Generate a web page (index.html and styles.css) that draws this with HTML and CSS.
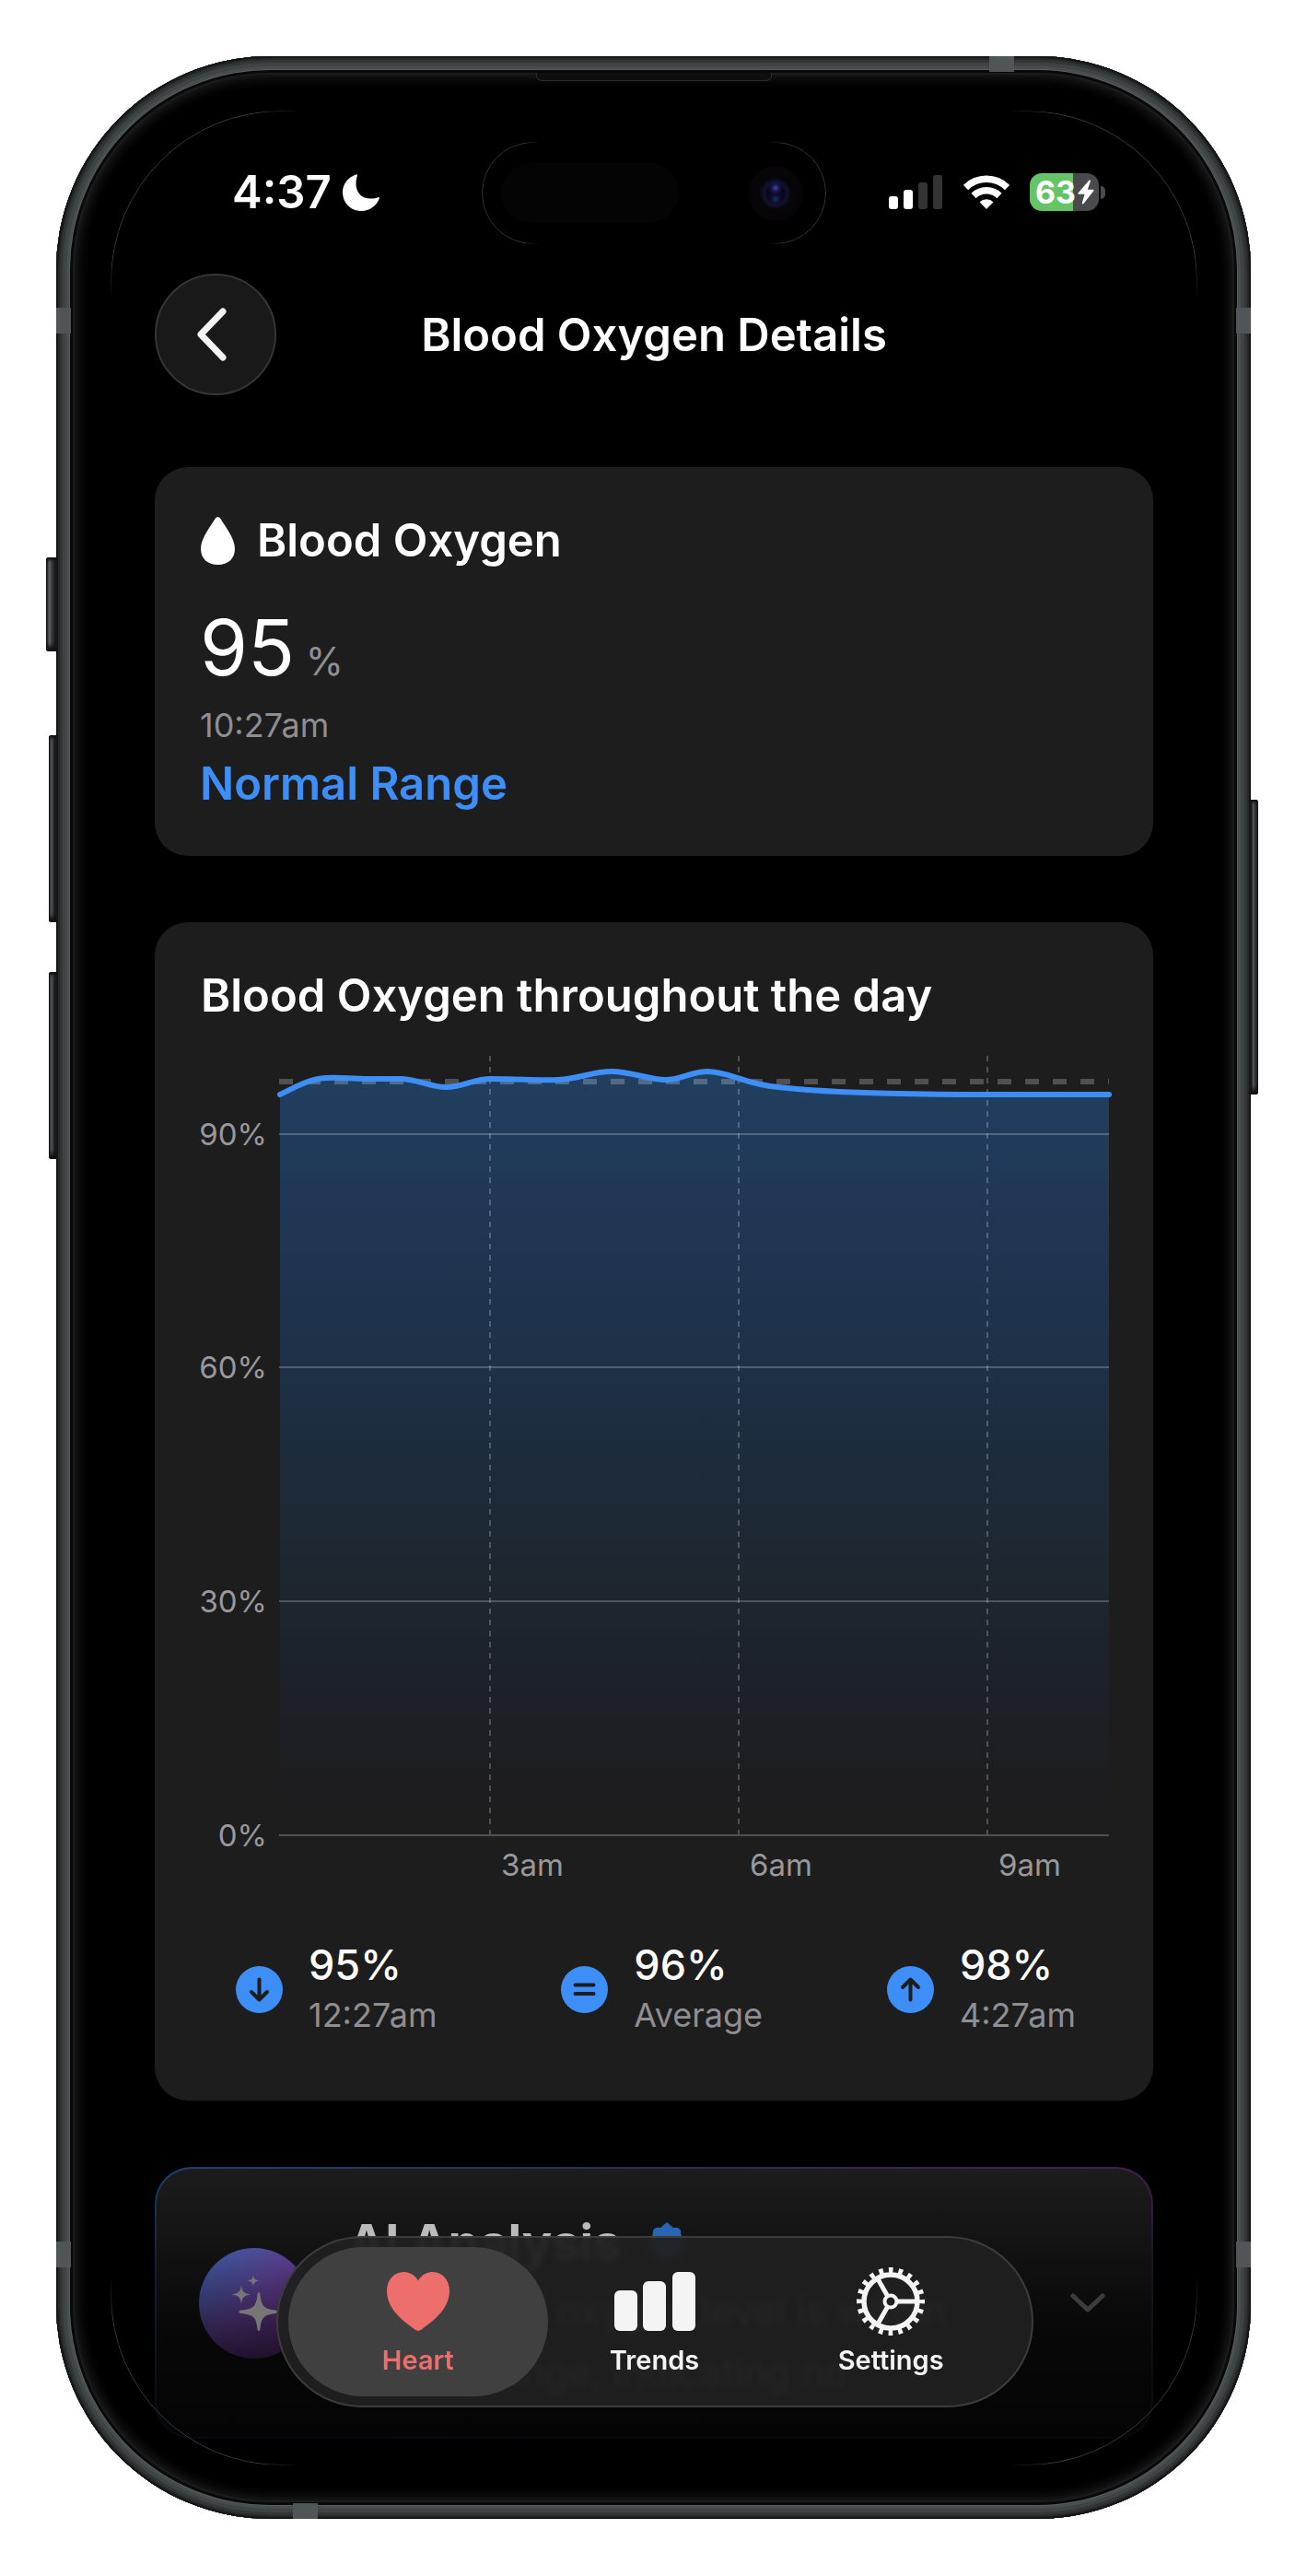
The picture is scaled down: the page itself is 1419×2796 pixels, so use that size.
FILE: index.html
```html
<!DOCTYPE html>
<html lang="en">
<head>
  <meta charset="UTF-8">
  <meta name="viewport" content="width=device-width, initial-scale=1.0">
  <title>Blood Oxygen Details</title>
  <link rel="stylesheet" href="styles.css">
</head>
<body>
  <div class="phone">
    <!-- hardware -->
    <span class="key key-action"></span>
    <span class="key key-up"></span>
    <span class="key key-down"></span>
    <span class="key key-power"></span>
    <span class="band band-top"></span>
    <span class="band band-bottom"></span>
    <span class="band band-side band-left-top"></span>
    <span class="band band-side band-right-top"></span>
    <span class="band band-side band-left-bottom"></span>
    <span class="band band-side band-right-bottom"></span>
    <span class="speaker"></span>
    <span class="screen-edge"></span>
    <div class="island">
      <span class="island-sensor"></span>
      <span class="island-camera"></span>
    </div>

    <div class="screen">
      <div class="status">
        <div class="status-left">
          <span class="status-time">4:37</span>
          <svg class="moon" width="40" height="40" viewBox="0 0 40 40"><path fill="#fff" d="M14.5 0.5C15.5 0 16.3 0.8 15.8 2C12 13 16 27 31 26.6C34 26.5 36.500 25.800 38.300 25.200C39.500 24.800 40.200 25.500 39.800 26.600C36.500 35 29 40 20.500 40C9 40 0 31.500 0 19.500C0 10.500 6.500 3 14.500 0.500Z"/></svg>
        </div>
        <div class="status-right">
          <svg width="59" height="38" viewBox="0 0 59 38">
            <rect x="0" y="23" width="10" height="14" rx="3" fill="#fff"/>
            <rect x="16" y="16" width="10" height="21" rx="3" fill="#fff"/>
            <rect x="32" y="8" width="10" height="29" rx="3" fill="#333"/>
            <rect x="48" y="0" width="10" height="37" rx="3" fill="#333"/>
          </svg>
          <svg width="50" height="38" viewBox="0 0 50 38">
            <g fill="none" stroke="#fff" stroke-width="7.500">
              <path d="M2.500 13.500A32 32 0 0 1 47.500 13.500"/>
              <path d="M11 22.500A20 20 0 0 1 39 22.500"/>
            </g>
            <path fill="#fff" d="M25 37L17.500 29.200A10.800 10.800 0 0 1 32.500 29.200Z"/>
          </svg>
          <div class="battery">
            <span class="battery-body"><span class="battery-level">63</span><svg width="18" height="27" viewBox="0 0 18 27"><path fill="#fff" d="M12.500 0.500L0.500 14.500Q0 15.700 1.200 15.700H7.500L4.800 25.500Q5 27 6.500 26L17.500 12Q18 10.800 16.800 10.700H10.800L14 1.500Q14 0 12.500 0.500Z"/></svg></span>
            <span class="battery-cap"></span>
          </div>
        </div>
      </div>

      <header class="header">
        <button class="back" type="button" aria-label="Back">
          <svg width="34" height="58" viewBox="0 0 34 58"><path d="M29 4L5 29L29 54" fill="none" stroke="#f2f2f2" stroke-width="7" stroke-linecap="round" stroke-linejoin="round"/></svg>
        </button>
        <h1 class="header-title">Blood Oxygen Details</h1>
      </header>

      <main class="content">
        <section class="card current">
          <h2 class="card-title">
            <svg width="37" height="52" viewBox="0 0 37 52"><path fill="#fff" d="M15.500 2Q18.500 -2 21.500 2C26 10 37 23 37 34.500C37 45.500 29.500 52 18.500 52C7.500 52 0 45.500 0 34.500C0 23 11 10 15.500 2Z"/></svg>
            Blood Oxygen
          </h2>
          <p class="current-value">95 <span class="current-unit">%</span></p>
          <p class="current-time">10:27am</p>
          <p class="current-range">Normal Range</p>
        </section>

        <section class="card day">
          <h2 class="card-title">Blood Oxygen throughout the day</h2>
          <svg class="chart" viewBox="0 0 988 904" role="img" aria-label="Blood oxygen by hour">
            <defs>
              <linearGradient id="fill" x1="0" y1="0" x2="0" y2="1">
                <stop offset="0" stop-color="#213f60"/>
                <stop offset="0.250" stop-color="#1f3450"/>
                <stop offset="0.400" stop-color="#1e3046"/>
                <stop offset="0.520" stop-color="#1d2b3a"/>
                <stop offset="0.660" stop-color="#1d2730"/>
                <stop offset="0.800" stop-color="#1d2129"/>
                <stop offset="0.930" stop-color="#1d1d20"/>
                <stop offset="1" stop-color="#1d1d1d"/>
              </linearGradient>
            </defs>
            <path fill="url(#fill)" d="M88 45C103 38 118 28 138 27C154 26 164 28 184 28H218C238 28 250 37 268 37C286 37 298 28 317 28C350 28 366 30 390 29C414 28 426 20 448 20C470 20 488 29 507 29C524 29 534 20 552 20C576 20 592 34 629 37C690 44 780 45 860 45H988V848H88Z"/>
            <g class="chart-grid">
              <path d="M87 88H988M87 341H988M87 595H988"/>
              <path d="M87 849H988"/>
              <path stroke-dasharray="6 6" d="M316 3V848M586 3V848M856 3V848"/>
              <path stroke-width="6" stroke-dasharray="15 15" d="M87 31H988"/>
            </g>
            <path class="chart-line" d="M88 45C103 38 118 28 138 27C154 26 164 28 184 28H218C238 28 250 37 268 37C286 37 298 28 317 28C350 28 366 30 390 29C414 28 426 20 448 20C470 20 488 29 507 29C524 29 534 20 552 20C576 20 592 34 629 37C690 44 780 45 860 45H988"/>
            <g class="chart-label" text-anchor="end">
              <text x="74" y="100">90%</text>
              <text x="74" y="353">60%</text>
              <text x="74" y="607">30%</text>
              <text x="74" y="861">0%</text>
            </g>
            <g class="chart-label">
              <text x="328" y="893">3am</text>
              <text x="598" y="893">6am</text>
              <text x="868" y="893">9am</text>
            </g>
          </svg>
          <div class="stats">
            <div class="stat">
              <svg class="stat-icon" viewBox="0 0 51 51"><circle cx="25.500" cy="25.500" r="25.500"/><path d="M25.500 14.500V36.500M17 28L25.500 36.500L34 28"/></svg>
              <div>
                <div class="stat-value">95%</div>
                <div class="stat-note">12:27am</div>
              </div>
            </div>
            <div class="stat">
              <svg class="stat-icon" viewBox="0 0 51 51"><circle cx="25.500" cy="25.500" r="25.500"/><path d="M15.500 20.500H35.500M15.500 30H35.500"/></svg>
              <div>
                <div class="stat-value">96%</div>
                <div class="stat-note">Average</div>
              </div>
            </div>
            <div class="stat">
              <svg class="stat-icon" viewBox="0 0 51 51"><circle cx="25.500" cy="25.500" r="25.500"/><path d="M25.500 36.500V14.500M17 23L25.500 14.500L34 23"/></svg>
              <div>
                <div class="stat-value">98%</div>
                <div class="stat-note">4:27am</div>
              </div>
            </div>
          </div>
        </section>

        <section class="ai">
          <div class="ai-icon">
            <svg width="52" height="64" viewBox="0 0 52 64"><g fill="#767676">
              <path d="M31 20C32 20 32.300 21 32.600 23C34 36 37 38 49 39.500C52 40 52 42.500 49 43C37 44.500 34 47 32.600 59C32.300 61 32 62 31 62C30 62 29.700 61 29.400 59C28 47 25 44.500 12 43C8.500 42.500 8.500 40 12 39.500C25 38 28 36 29.400 23C29.700 21 30 20 31 20Z"/>
              <path d="M12 12C13 19 14 21 22 22.500C14 24 13 26 12 33C11 26 10 24 1.500 22.500C10 21 11 19 12 12Z"/>
              <path d="M25 1C25.700 5.500 26.500 6.800 32 7.500C26.500 8.300 25.700 9.500 25 14C24.300 9.500 23.500 8.300 18 7.500C23.500 6.800 24.300 5.500 25 1Z"/>
            </g></svg>
          </div>
          <div class="ai-body">
            <h2 class="ai-title">AI Analysis
              <svg width="44" height="44" viewBox="0 0 44 44"><path fill="#2a65b5" d="M22 0L29 6Q38 4 37.500 14L44 22L38 30Q38 39 29 38L22 44L15 38Q6 39 6 30L0 22L6.500 14Q6 4 15 6Z"/></svg>
            </h2>
            <p class="ai-text">Your blood oxygen level is within normal range, indicating no</p>
          </div>
          <svg class="ai-chevron" width="38" height="22" viewBox="0 0 38 22"><path d="M3 3L19 18L35 3" fill="none" stroke="#3d3d3f" stroke-width="5" stroke-linecap="round" stroke-linejoin="round"/></svg>
        </section>
      </main>
    </div>

    <nav class="tabs">
      <a class="tab active" href="#heart">
        <svg width="68" height="64" viewBox="0 0 68 64"><path fill="currentColor" d="M34 9.500C30.500 3.500 25 0 18.500 0C8 0 0 8.500 0 20.500C0 38 14 51 30.500 62.500Q34 65 37.500 62.500C54 51 68 38 68 20.500C68 8.500 60 0 49.500 0C43 0 37.500 3.500 34 9.500Z"/></svg>
        Heart
      </a>
      <a class="tab" href="#trends">
        <svg width="88" height="64" viewBox="0 0 88 64"><g fill="currentColor">
          <rect x="0" y="20" width="25" height="44" rx="6"/>
          <rect x="31" y="10" width="25" height="54" rx="6"/>
          <rect x="63" y="0" width="25" height="64" rx="6"/>
        </g></svg>
        Trends
      </a>
      <a class="tab" href="#settings">
        <svg width="74" height="74" viewBox="-37 -37 74 74"><g fill="none" stroke="currentColor">
          <circle r="29" stroke-width="5.500"/>
          <circle r="34" stroke-width="6" stroke-dasharray="4.680 6" stroke-dashoffset="2.340"/>
          <circle r="6.500" stroke-width="4"/>
          <path stroke-width="5" d="M7 0H28M-3.500 -6L-14 -24.500M-3.500 6L-14 24.500"/>
        </g></svg>
        Settings
      </a>
    </nav>
  </div>
</body>
</html>
```

FILE: styles.css
```css
html, body {
  margin: 0;
  padding: 0;
  box-sizing: border-box;
  background-color: #fff;
  color: #fff;
  font-family: Inter, "Liberation Sans", sans-serif;
}
*, *:before, *:after { box-sizing: inherit; }
body { padding: 61px 61px 62px; }
h1, h2, p { margin: 0; font-weight: 400; }
svg { display: block; flex-shrink: 0; }

/* phone body, the rings of the metal frame are inset shadows */
.phone {
  position: relative;
  max-width: 1297px;
  margin: 0 auto;
  padding: 59px;
  border-radius: 232px;
  background-color: #000;
  box-shadow:
    inset 0 0 0 2px #141617,
    inset 0 0 0 4px #242829,
    inset 0 0 0 7px #313536,
    inset 0 0 0 11px #3e4344,
    inset 0 0 0 14px #484e50,
    inset 0 0 0 15px #585e60,
    inset 0 0 0 18px #080909,
    inset 0 0 0 20px #1c1c1c,
    inset 0 0 14px 22px #222;
}
.key {
  position: absolute;
  left: -8px;
  width: 8px;
  height: 203px;
  border-radius: 3px 0 0 3px;
  background: linear-gradient(90deg, #17191a, #656a6b 30%, #35393a 60%, #1c1e1f);
  box-shadow: inset 0 3px 3px #111, inset 0 -6px 5px #111;
}
.key-action { top: 544px; left: -11px; width: 11px; height: 102px; }
.key-up { top: 737px; }
.key-down { top: 994px; }
.key-power { top: 807px; left: auto; right: -8px; height: 320px; border-radius: 0 3px 3px 0; }
.band { position: absolute; width: 27px; height: 17px; background-color: #505657; }
.band-side { width: 16px; height: 28px; }
.band-top { top: 0; right: 257px; }
.band-bottom { bottom: 0; left: 257px; }
.band-left-top { top: 273px; left: 0; }
.band-right-top { top: 273px; right: 0; }
.band-left-bottom { bottom: 273px; left: 0; }
.band-right-bottom { bottom: 273px; right: 0; }
.speaker {
  position: absolute;
  top: 18px;
  left: 50%;
  width: 256px;
  height: 9px;
  margin-left: -128px;
  background-color: #0e0e0e;
  border: 1px solid #2c2c2c;
  border-top: 0;
  border-radius: 0 0 6px 6px;
}
/* hairline that shows only at the four corners of the display */
.screen-edge {
  position: absolute;
  inset: 59px 58px 58px 59px;
  border: 1px solid #3c3c3c;
  border-radius: 185px;
  -webkit-mask:
    radial-gradient(circle at 0 0, #000 160px, transparent 205px) 0 0 / 50% 50% no-repeat,
    radial-gradient(circle at 100% 0, #000 160px, transparent 205px) 100% 0 / 50% 50% no-repeat,
    radial-gradient(circle at 0 100%, #000 160px, transparent 205px) 0 100% / 50% 50% no-repeat,
    radial-gradient(circle at 100% 100%, #000 160px, transparent 205px) 100% 100% / 50% 50% no-repeat;
}
.island {
  position: absolute;
  top: 93px;
  left: 50%;
  width: 374px;
  height: 111px;
  margin-left: -187px;
  padding: 22px 25px 22px 21px;
  display: flex;
  align-items: center;
  justify-content: space-between;
}
.island:before {
  content: "";
  position: absolute;
  inset: 0;
  border: 1px solid #363636;
  border-radius: 56px;
  -webkit-mask: linear-gradient(90deg, #000 45px, transparent 62px, transparent calc(100% - 62px), #000 calc(100% - 45px));
}
.island-sensor { width: 193px; height: 65px; border-radius: 33px; background-color: #040404; }
.island-camera {
  width: 60px;
  height: 60px;
  border-radius: 50%;
  background: radial-gradient(circle at 50% 40%, #4a4a9a 0, #151550 4px, transparent 8px),
    radial-gradient(circle at 50% 60%, #0d4048 0, #101038 4px, transparent 8px),
    radial-gradient(circle, #08081c 10px, #12122c 12px, #0c0c20 15px, #070508 17px, #060406 30px);
}

.screen { padding: 0 47px 28px 48px; }

.status {
  height: 177px;
  padding: 0 52px 0 84px;
  display: flex;
  align-items: center;
  justify-content: space-between;
}
.status-left, .status-right { display: flex; align-items: center; }
.status-left { gap: 12px; }
.status-right { gap: 22px; }
.status-time { font-size: 49px; font-weight: 600; line-height: 60px; }
.battery { display: flex; align-items: center; gap: 2px; }
.battery-body {
  width: 75px;
  height: 41px;
  padding: 0 5px 0 6px;
  display: flex;
  align-items: center;
  justify-content: space-between;
  border-radius: 13px;
  background: linear-gradient(90deg, #65c466 47px, #4a4a4c 47px);
}
.battery-level { font-size: 34px; font-weight: 700; line-height: 41px; }
.battery-cap { width: 5px; height: 14px; border-radius: 0 5px 5px 0; background-color: #4a4a4c; }

.header {
  display: grid;
  grid-template-columns: 132px 1fr 132px;
  align-items: center;
}
.back {
  width: 132px;
  height: 132px;
  padding: 0 9px 0 0;
  display: flex;
  align-items: center;
  justify-content: center;
  border: 2px solid #353535;
  border-radius: 50%;
  background-color: #191919;
  cursor: pointer;
}
.header-title { padding-top: 2px; font-size: 49px; font-weight: 600; line-height: 60px; text-align: center; }

.content { padding-top: 78px; display: flex; flex-direction: column; gap: 72px; }
.card { padding: 50px 48px 48px; border-radius: 36px; background-color: #1d1d1d; }
.card-title { padding-left: 2px; display: flex; align-items: center; gap: 24px; font-size: 49px; font-weight: 600; line-height: 60px; }

.current { height: 422px; }
.current-value { padding: 39px 0 0 1px; font-size: 84px; line-height: 94px; }
.current-unit { margin-left: -12px; font-size: 42px; color: #8e8e93; }
.current-time { padding-left: 1px; font-size: 36px; line-height: 44px; color: #8e8e93; }
.current-range { padding: 12px 0 0 1px; font-size: 49px; font-weight: 600; line-height: 60px; color: #3e8ef7; }

.day { padding-bottom: 67px; }
.chart { width: 100%; margin-top: 32px; overflow: visible; }
.chart-grid { fill: none; stroke: rgba(235, 235, 245, 0.25); stroke-width: 2; }
.chart-line { fill: none; stroke: #3e8ef7; stroke-width: 6; stroke-linecap: round; }
.chart-label { fill: #98989e; font-size: 33px; }
.stats { padding: 58px 36px 0 40px; display: flex; justify-content: space-between; }
.stat { display: flex; align-items: center; gap: 28px; }
.stat-icon { width: 51px; height: 51px; }
.stat-icon circle { fill: #3e8ef7; }
.stat-icon path { fill: none; stroke: #1d1d1d; stroke-width: 4; stroke-linecap: round; stroke-linejoin: round; }
.stat-value { font-size: 45px; font-weight: 500; line-height: 56px; }
.stat-note { font-size: 36px; line-height: 52px; color: #8e8e93; }

.ai {
  height: 295px;
  padding: 0 50px 0 46px;
  display: flex;
  align-items: center;
  gap: 42px;
  border: 2px solid transparent;
  border-radius: 40px;
  background:
    linear-gradient(#1c1c1c, #141414 25%, #080808 60%, #040404) padding-box,
    linear-gradient(rgba(0, 0, 0, 0), rgba(0, 0, 0, 0.5) 35%, rgba(0, 0, 0, 0.85)) border-box,
    linear-gradient(90deg, #1d4272, #2f2c58 50%, #45204f) border-box;
}
.ai-icon {
  width: 120px;
  height: 120px;
  display: flex;
  align-items: center;
  justify-content: center;
  border-radius: 50%;
  background: linear-gradient(rgba(0, 0, 0, 0.1), rgba(0, 0, 0, 0.7)), linear-gradient(135deg, #3d6ab8, #6a45a0 50%, #6a2a88);
}
.ai-body { flex: 1; align-self: flex-start; padding-top: 50px; }
.ai-title { display: flex; align-items: center; gap: 28px; font-size: 54px; font-weight: 700; line-height: 60px; color: #bbb; }
.ai-text { padding-top: 12px; font-size: 42px; line-height: 66px; color: #8e8e93; }

.tabs {
  position: absolute;
  left: 50%;
  bottom: 121px;
  width: 822px;
  height: 186px;
  margin-left: -410px;
  padding: 12px 24px;
  display: flex;
  border: 2px solid #3c3c3c;
  border-radius: 93px;
  background-color: rgba(32, 32, 32, 0.95);
  -webkit-backdrop-filter: blur(3px);
  backdrop-filter: blur(3px);
}
.tab {
  position: relative;
  z-index: 1;
  flex: 1;
  padding-bottom: 8px;
  display: grid;
  grid-template-rows: 92px 36px;
  align-content: center;
  align-items: center;
  justify-items: center;
  font-size: 29px;
  font-weight: 600;
  line-height: 36px;
  color: #f4f4f4;
  text-decoration: none;
}
.tab.active { color: #ee6e6c; }
.tab.active:before {
  content: "";
  position: absolute;
  z-index: -1;
  inset: -2px -13px;
  border-radius: 81px;
  background-color: #404040;
}
```
